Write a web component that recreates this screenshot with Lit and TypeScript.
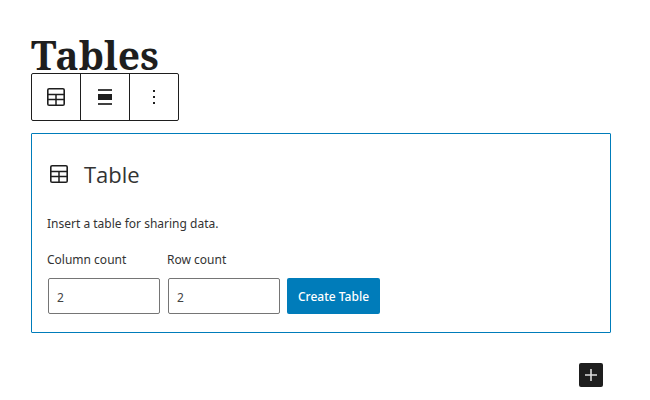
import { LitElement, html, css, svg } from "lit";
import { customElement } from "lit/decorators.js";

const tableIcon = html`<svg class="icon" viewBox="0 0 24 24" aria-hidden="true">
  <rect x="3.8" y="3.8" width="16.4" height="16.4" rx="1.3" fill="none" stroke="currentColor" stroke-width="1.6" />
  <path d="M4 9.5h16M4 14.5h16M12 9.5v11" fill="none" stroke="currentColor" stroke-width="1.5" />
</svg>`;

const alignIcon = html`<svg class="icon" viewBox="0 0 24 24" aria-hidden="true">
  <path d="M5 4h14v2H5zM5 18h14v2H5z" fill="currentColor" opacity="0.85" />
  <path d="M5 9h14v6H5z" fill="currentColor" />
</svg>`;

const moreIcon = html`<svg class="icon" viewBox="0 0 24 24" aria-hidden="true">
  ${[5, 11, 17].map((y) => svg`<rect x="11" y=${y} width="2" height="2" fill="currentColor" />`)}
</svg>`;

const plusIcon = html`<svg class="icon" viewBox="0 0 24 24" aria-hidden="true">
  <path d="M12 6v12M6 12h12" fill="none" stroke="currentColor" stroke-width="1.6" />
</svg>`;

@customElement("app-root")
export class AppRoot extends LitElement {
  static styles = css`
    :host {
      display: block;
      box-sizing: border-box;
      padding: 32px 39px 13px 31px;
      color: #1e1e1e;
      background: #fff;
      font-family: "Segoe UI", "Noto Sans", "Open Sans", sans-serif;
      font-size: 12px;
      line-height: 20px;
    }
    * {
      box-sizing: border-box;
    }
    .icon {
      display: block;
      flex: none;
      width: 24px;
      height: 24px;
    }
    .title {
      margin: 0;
      height: 41px;
      font: bold 39px/46px "Noto Serif", "DejaVu Serif Condensed", "DejaVu Serif", serif;
    }
    button {
      display: flex;
      align-items: center;
      justify-content: center;
      margin: 0;
      padding: 0;
      border: 0;
      background: none;
      color: inherit;
      font: inherit;
    }
    .toolbar {
      display: flex;
      width: fit-content;
      border: 1px solid #1e1e1e;
      border-radius: 2px;
      background: #fff;
    }
    .tool {
      width: 48px;
      height: 46px;
    }
    .tool + .tool {
      width: 49px;
      border-left: 1px solid #1e1e1e;
    }
    .card {
      margin-top: 12px;
      padding: 24px 15px 18px;
      border: 1px solid #007cba;
      border-radius: 1px;
    }
    .heading {
      display: flex;
      align-items: center;
      gap: 13px;
      margin: 0;
      font-family: "Segoe UI", "Open Sans", "Noto Sans", sans-serif;
      font-size: 22px;
      font-weight: 400;
      line-height: 32px;
    }
    .heading span {
      color: #333;
    }
    .hint {
      margin: 24px 0 16px;
      color: #333;
    }
    .form {
      display: flex;
      align-items: flex-end;
      gap: 7px;
    }
    .field {
      display: flex;
      flex-direction: column;
      gap: 8px;
      width: 113px;
      color: #333;
    }
    .input {
      width: 112px;
      height: 36px;
      margin: 0;
      align-self: flex-end;
      padding: 2px 8px 0;
      border: 1px solid #757575;
      border-radius: 2px;
      background: #fff;
      color: #444;
      font: inherit;
    }
    .create {
      height: 36px;
      padding: 2px 11px 0;
      border-radius: 2px;
      background: #007cba;
      color: #fff;
      font-weight: 500;
      white-space: nowrap;
    }
    .footer {
      display: flex;
      justify-content: flex-end;
      padding: 30px 8px 0;
    }
    .add {
      border-radius: 2px;
      background: #1e1e1e;
      color: #ddd;
    }
  `;

  render() {
    return html`
      <h1 class="title">Tables</h1>
      <div class="toolbar" role="toolbar" aria-label="Block tools">
        <button class="tool" type="button" aria-label="Table">${tableIcon}</button>
        <button class="tool" type="button" aria-label="Align">${alignIcon}</button>
        <button class="tool" type="button" aria-label="Options">${moreIcon}</button>
      </div>
      <section class="card">
        <h2 class="heading">${tableIcon}<span>Table</span></h2>
        <p class="hint">Insert a table for sharing data.</p>
        <form class="form">
          <div class="field">
            <label for="columns">Column count</label>
            <input class="input" id="columns" type="text" inputmode="numeric" value="2" />
          </div>
          <div class="field">
            <label for="rows">Row count</label>
            <input class="input" id="rows" type="text" inputmode="numeric" value="2" />
          </div>
          <button class="create" type="button">Create Table</button>
        </form>
      </section>
      <div class="footer">
        <button class="add" type="button" aria-label="Add block">${plusIcon}</button>
      </div>
    `;
  }
}
